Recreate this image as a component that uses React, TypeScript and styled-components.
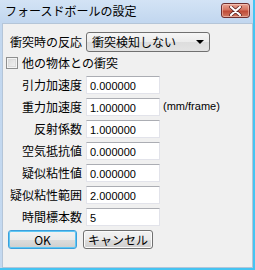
import React from 'react';
import styled, { createGlobalStyle } from 'styled-components';

const GlobalStyle = createGlobalStyle`
  html, body {
    margin: 0;
    padding: 0;
    background: #c4d9f0;
  }
  * {
    box-sizing: border-box;
  }
`;

const jp = `"Noto Sans CJK JP", "Noto Sans", sans-serif`;
const num = `"Liberation Sans", Arial, sans-serif`;

const Window = styled.div`
  width: 255px;
  height: 270px;
  display: flex;
  flex-direction: column;
  background: linear-gradient(to bottom, #d3e3f5 0px, #c2d7ef 22px, #c4d9f0 100%);
  border-right: 2px solid #45c4f2;
  border-bottom: 2px solid #45c4f2;
  font-family: ${jp};
  color: #000;
`;

const TitleBar = styled.div`
  height: 23px;
  display: flex;
  align-items: center;
  justify-content: space-between;
  padding: 0 3px 0 5px;
`;

const Title = styled.span`
  font-size: 12px;
  line-height: 14px;
  margin-top: -1px;
`;

const CloseButton = styled.div`
  width: 29px;
  height: 15px;
  margin-top: -2px;
  border: 1px solid #6e3030;
  border-radius: 3px;
  background: linear-gradient(to bottom, #e8a493 0%, #d4735f 45%, #c04a36 55%, #d07a62 100%);
  display: flex;
  align-items: center;
  justify-content: center;
  box-shadow: inset 0 0 0 1px rgba(255, 220, 210, 0.5);
`;

const Body = styled.div`
  flex: 1;
  margin-left: 2px;
  background: #f0f0f0;
  border: 1px solid #b4c5d8;
  padding-top: 8px;
  display: flex;
  flex-direction: column;
`;

const Form = styled.div`
  display: grid;
  grid-template-columns: 79px 74px auto;
  column-gap: 4px;
  row-gap: 4px;
  grid-auto-rows: 18px;
  align-items: center;
`;

const SelectRow = styled.div`
  display: grid;
  grid-template-columns: 79px auto;
  column-gap: 4px;
  align-items: center;
  height: 20px;
`;

const Label = styled.span`
  font-size: 12px;
  line-height: 14px;
  text-align: right;
  white-space: nowrap;
`;

const Select = styled.div`
  width: 124px;
  height: 20px;
  border: 1px solid #707070;
  border-radius: 3px;
  background: linear-gradient(to bottom, #f6f6f6 0%, #ebebeb 50%, #dddddd 51%, #e3e3e3 100%);
  display: flex;
  align-items: center;
  justify-content: space-between;
  padding: 0 4px 0 5px;
  font-size: 12px;
  line-height: 14px;
`;

const Arrow = styled.span`
  width: 0;
  height: 0;
  border-left: 4px solid transparent;
  border-right: 4px solid transparent;
  border-top: 4px solid #000;
  margin-right: 1px;
`;

const CheckRow = styled.label`
  display: flex;
  align-items: center;
  gap: 4px;
  margin: 4px 0 6px 3px;
  height: 14px;
  font-size: 12px;
  line-height: 14px;
`;

const CheckBox = styled.span`
  width: 12px;
  height: 12px;
  border: 1px solid #8e8f8f;
  background: #fff;
  box-shadow: inset 0 0 0 1px #f4f4f4, inset 0 0 0 2px #dcdcdc;
  background: linear-gradient(135deg, #d6d6d6, #f6f6f6);
`;

const Input = styled.div`
  height: 18px;
  width: 74px;
  background: #fff;
  border: 1px solid #e2e3ea;
  border-top-color: #abadb3;
  padding: 0 3px;
  display: flex;
  align-items: center;
  font-family: ${num};
  font-size: 11px;
  line-height: 13px;
  padding-top: 2px;
`;

const Unit = styled.span`
  font-family: ${num};
  font-size: 11px;
  line-height: 13px;
  margin-left: -1px;
  margin-top: -2px;
`;

const Buttons = styled.div`
  display: flex;
  gap: 6px;
  margin: 4px 0 0 5px;
`;

const Button = styled.div<{ $default?: boolean }>`
  width: ${(p) => (p.$default ? 69 : 70)}px;
  height: 19px;
  border: 1px solid ${(p) => (p.$default ? '#3c9fdc' : '#707070')};
  border-radius: 3px;
  background: linear-gradient(to bottom, #f2f2f2 0%, #ebebeb 50%, #dddddd 51%, #cfcfcf 100%);
  box-shadow: ${(p) => (p.$default ? 'inset 0 0 0 1px #5fc8f4' : 'inset 0 0 0 1px #fbfbfb')};
  display: flex;
  align-items: center;
  justify-content: center;
  font-size: 12px;
  line-height: 14px;
`;

const rows: { label: string; value: string; unit?: string }[] = [
  { label: '引力加速度', value: '0.000000' },
  { label: '重力加速度', value: '1.000000', unit: '(mm/frame)' },
  { label: '反射係数', value: '1.000000' },
  { label: '空気抵抗値', value: '0.000000' },
  { label: '疑似粘性値', value: '0.000000' },
  { label: '疑似粘性範囲', value: '2.000000' },
  { label: '時間標本数', value: '5' },
];

const App = () => (
  <>
    <GlobalStyle />
    <Window>
      <TitleBar>
        <Title>フォースドボールの設定</Title>
        <CloseButton>
          <svg width="13" height="10" viewBox="0 0 13 10">
            <path
              d="M2 1 L11 9 M11 1 L2 9"
              stroke="#5a2020"
              strokeWidth="3.6"
              strokeLinecap="round"
            />
            <path
              d="M2 1 L11 9 M11 1 L2 9"
              stroke="#fff"
              strokeWidth="2.2"
              strokeLinecap="round"
            />
          </svg>
        </CloseButton>
      </TitleBar>
      <Body>
        <SelectRow>
          <Label>衝突時の反応</Label>
          <Select>
            <span>衝突検知しない</span>
            <Arrow />
          </Select>
        </SelectRow>
        <CheckRow>
          <CheckBox />
          <span>他の物体との衝突</span>
        </CheckRow>
        <Form>
          {rows.map((r) => (
            <React.Fragment key={r.label}>
              <Label>{r.label}</Label>
              <Input>{r.value}</Input>
              {r.unit ? <Unit>{r.unit}</Unit> : <span />}
            </React.Fragment>
          ))}
        </Form>
        <Buttons>
          <Button $default>OK</Button>
          <Button>キャンセル</Button>
        </Buttons>
      </Body>
    </Window>
  </>
);

export default App;
